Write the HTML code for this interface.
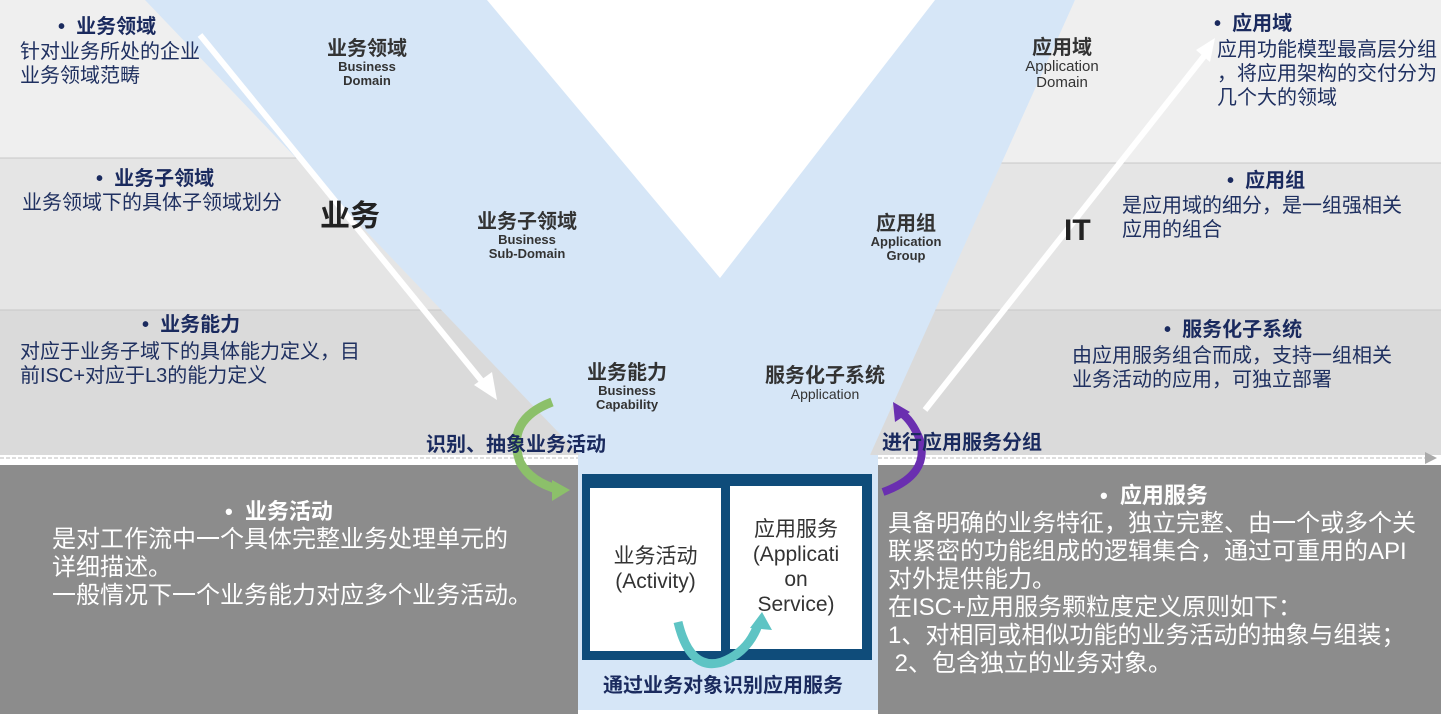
<!DOCTYPE html>
<html><head><meta charset="utf-8"><style>
body{margin:0;width:1441px;height:714px;overflow:hidden;background:#fff;position:relative;font-family:"Liberation Sans","Noto Sans CJK SC",sans-serif}
.t{position:absolute;white-space:nowrap;line-height:1.15}
.h{color:#1a2a5e;font-weight:bold;font-size:20px}
.b{color:#1f3060;font-size:20px}
.lbl{position:absolute;text-align:center;color:#333;font-weight:bold;line-height:1.05}
.lbl .c{font-size:20px;display:block}
.lbl .e{font-size:13px;display:block}
.w{color:#fff;font-size:24px}
</style></head><body>
<svg width="1441" height="714" style="position:absolute;left:0;top:0">
<polygon points="0,0 200,0 330,158 0,158" fill="#efefef"/>
<polygon points="0,158 330,158 460,310 0,310" fill="#e5e5e5"/>
<polygon points="0,310 460,310 580,455 0,455" fill="#dadada"/>
<line x1="0" y1="158" x2="330" y2="158" stroke="#c8c8c8"/>
<line x1="0" y1="310" x2="460" y2="310" stroke="#c8c8c8"/>
<polygon points="1075,0 1441,0 1441,163 990,163" fill="#efefef"/>
<polygon points="990,163 1441,163 1441,310 905,310" fill="#e5e5e5"/>
<polygon points="905,310 1441,310 1441,455 870,455" fill="#dadada"/>
<line x1="990" y1="163" x2="1441" y2="163" stroke="#c8c8c8"/>
<line x1="905" y1="310" x2="1441" y2="310" stroke="#c8c8c8"/>
<polygon points="145,0 487,0 720,278 935,0 1075,0 870,455 878,455 878,710 578,710 578,455 580,455" fill="#d6e6f7"/>
<rect x="0" y="465" width="578" height="249" fill="#8c8c8c"/>
<rect x="878" y="465" width="563" height="249" fill="#8c8c8c"/>
<line x1="0" y1="458" x2="578" y2="458" stroke="#bbb" stroke-dasharray="4,2"/>
<line x1="878" y1="458" x2="1425" y2="458" stroke="#bbb" stroke-dasharray="4,2"/>
<polygon points="1425,452 1437,458 1425,464" fill="#aaa"/>
<line x1="200" y1="35" x2="485" y2="385" stroke="#fff" stroke-width="6"/>
<polygon points="474,385 497,400 492,372" fill="#fff"/>
<line x1="925" y1="410" x2="1205" y2="55" stroke="#fff" stroke-width="6"/>
<polygon points="1196,50 1215,38 1210,62" fill="#fff"/>
<rect x="582" y="474" width="290" height="186" fill="#0f4c7a"/>
<rect x="590" y="488" width="131" height="163" fill="#fff"/>
<rect x="730" y="486" width="132" height="163" fill="#fff"/>
<path d="M552,402 Q505,420 520,462 Q530,482 560,490" stroke="#8cc06a" stroke-width="9" fill="none"/>
<polygon points="552,480 570,490 552,501" fill="#8cc06a"/>
<path d="M883,492 Q930,475 920,440 Q912,420 900,412" stroke="#6a2fb0" stroke-width="8" fill="none"/>
<polygon points="893,402 910,412 895,422" fill="#6a2fb0"/>
<path d="M678,622 Q690,672 722,662 Q748,652 758,625" stroke="#5ec4c4" stroke-width="9" fill="none"/>
<polygon points="750,628 762,612 772,630" fill="#5ec4c4"/>
</svg>

<div class="t h" style="left:58px;top:16px">•&nbsp;&nbsp;业务领域</div>
<div class="t b" style="left:20px;top:40px;line-height:24px">针对业务所处的企业<br>业务领域范畴</div>
<div class="t h" style="left:96px;top:168px">•&nbsp;&nbsp;业务子领域</div>
<div class="t b" style="left:22px;top:192px">业务领域下的具体子领域划分</div>
<div class="t h" style="left:142px;top:314px">•&nbsp;&nbsp;业务能力</div>
<div class="t b" style="left:20px;top:340px;line-height:24px">对应于业务子域下的具体能力定义，目<br>前ISC+对应于L3的能力定义</div>
<div class="t" style="left:320px;top:200px;font-size:30px;font-weight:bold;color:#222">业务</div>

<div class="lbl" style="left:307px;top:39px;width:120px"><span class="c">业务领域</span><span class="e">Business<br>Domain</span></div>
<div class="lbl" style="left:457px;top:212px;width:140px"><span class="c">业务子领域</span><span class="e">Business<br>Sub-Domain</span></div>
<div class="lbl" style="left:567px;top:363px;width:120px"><span class="c">业务能力</span><span class="e">Business<br>Capability</span></div>
<div class="lbl" style="left:1002px;top:38px;width:120px"><span class="c">应用域</span><span class="e" style="font-weight:normal;font-size:15px">Application<br>Domain</span></div>
<div class="lbl" style="left:846px;top:214px;width:120px"><span class="c">应用组</span><span class="e">Application<br>Group</span></div>
<div class="lbl" style="left:750px;top:366px;width:150px"><span class="c">服务化子系统</span><span class="e" style="font-weight:normal;font-size:14px">Application</span></div>

<div class="t h" style="left:1214px;top:13px">•&nbsp;&nbsp;应用域</div>
<div class="t b" style="left:1217px;top:38px;line-height:24px">应用功能模型最高层分组<br>，将应用架构的交付分为<br>几个大的领域</div>
<div class="t h" style="left:1227px;top:170px">•&nbsp;&nbsp;应用组</div>
<div class="t b" style="left:1122px;top:194px;line-height:24px">是应用域的细分，是一组强相关<br>应用的组合</div>
<div class="t" style="left:1064px;top:214px;font-size:30px;font-weight:bold;color:#222">IT</div>
<div class="t h" style="left:1164px;top:319px">•&nbsp;&nbsp;服务化子系统</div>
<div class="t b" style="left:1072px;top:344px;line-height:24px">由应用服务组合而成，支持一组相关<br>业务活动的应用，可独立部署</div>

<div class="t h" style="left:426px;top:434px">识别、抽象业务活动</div>
<div class="t h" style="left:882px;top:432px">进行应用服务分组</div>

<div class="t w" style="left:225px;top:499px;font-weight:bold;font-size:22px">•&nbsp;&nbsp;业务活动</div>
<div class="t w" style="left:52px;top:526px;line-height:28px">是对工作流中一个具体完整业务处理单元的<br>详细描述。<br>一般情况下一个业务能力对应多个业务活动。</div>

<div class="t w" style="left:1100px;top:483px;font-weight:bold;font-size:22px">•&nbsp;&nbsp;应用服务</div>
<div class="t w" style="left:888px;top:510px;line-height:28px">具备明确的业务特征，独立完整、由一个或多个关<br>联紧密的功能组成的逻辑集合，通过可重用的API<br>对外提供能力。<br>在ISC+应用服务颗粒度定义原则如下：<br>1、对相同或相似功能的业务活动的抽象与组装；<br>&nbsp;2、包含独立的业务对象。</div>

<div class="t" style="left:590px;top:544px;width:131px;text-align:center;font-size:21px;color:#333;line-height:25px;white-space:normal">业务活动<br>(Activity)</div>
<div class="t" style="left:730px;top:517px;width:132px;text-align:center;font-size:21px;color:#333;line-height:25px;white-space:normal">应用服务<br>(Applicati<br>on<br>Service)</div>
<div class="t h" style="left:603px;top:675px">通过业务对象识别应用服务</div>
</body></html>
